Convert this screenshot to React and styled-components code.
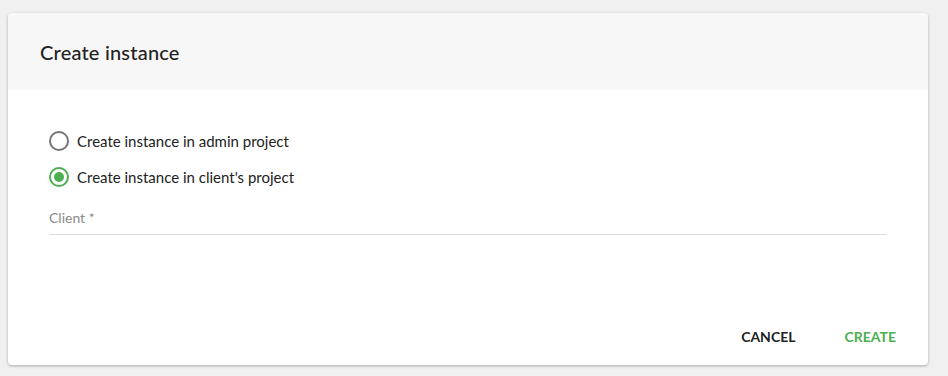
import styled, { createGlobalStyle } from "styled-components";

const GlobalStyle = createGlobalStyle`
    html, body {
        margin: 0;
        background: #f0f0f0;
        font-family: Lato, "Liberation Sans", sans-serif;
        color: #222;
    }
`

const Page = styled.div`
    padding: 13px 20px 10px 8px;
`

const Card = styled.div`
    width: 920px;
    height: 352px;
    background: #fff;
    border-radius: 4px;
    box-shadow: 0 1px 3px rgba(0, 0, 0, 0.3);
    display: flex;
    flex-direction: column;
    overflow: hidden;
`

const Header = styled.div`
    height: 77px;
    background: #f7f7f7;
    display: flex;
    align-items: center;
    padding: 0 32px;
    box-sizing: border-box;
`

const Title = styled.h2`
    margin: 0;
    font-size: 20px;
    font-weight: 500;
    letter-spacing: 0.2px;
    color: #222;
`

const Body = styled.div`
    flex: 1;
    padding: 41px 41px 0 41px;
`

const RadioRow = styled.label`
    display: flex;
    align-items: center;
    height: 20px;
    margin-bottom: 16px;
    cursor: pointer;
`

const RadioCircle = styled.span`
    width: 20px;
    height: 20px;
    box-sizing: border-box;
    border-radius: 50%;
    border: 2px solid ${p => (p.$checked ? "#4caf50" : "#757575")};
    display: flex;
    align-items: center;
    justify-content: center;
    margin-right: 8px;

    &::after {
        content: "";
        width: 10px;
        height: 10px;
        border-radius: 50%;
        background: #4caf50;
        display: ${p => (p.$checked ? "block" : "none")};
    }
`

const RadioText = styled.span`
    font-size: 15px;
    color: #222;
`

const Field = styled.div`
    margin-top: 20px;
    border-bottom: 1px solid #ddd;
    padding-bottom: 8px;
`

const FieldLabel = styled.span`
    font-size: 14px;
    color: #8a8a8a;
`

const Footer = styled.div`
    display: flex;
    justify-content: flex-end;
    gap: 33px;
    padding: 0 24px 12px 0;
`

const ActionButton = styled.button`
    background: none;
    border: none;
    font-family: inherit;
    font-size: 14px;
    font-weight: 700;
    text-transform: uppercase;
    color: ${p => (p.$primary ? "#4caf50" : "#222")};
    padding: 8px 8px;
    cursor: pointer;
`

function App() {
    return (
        <>
            <GlobalStyle />
            <Page>
                <Card>
                    <Header>
                        <Title>Create instance</Title>
                    </Header>
                    <Body>
                        <RadioRow>
                            <RadioCircle />
                            <RadioText>Create instance in admin project</RadioText>
                        </RadioRow>
                        <RadioRow>
                            <RadioCircle $checked />
                            <RadioText>Create instance in client's project</RadioText>
                        </RadioRow>
                        <Field>
                            <FieldLabel>Client *</FieldLabel>
                        </Field>
                    </Body>
                    <Footer>
                        <ActionButton>Cancel</ActionButton>
                        <ActionButton $primary>Create</ActionButton>
                    </Footer>
                </Card>
            </Page>
        </>
    );
}

export default App;
